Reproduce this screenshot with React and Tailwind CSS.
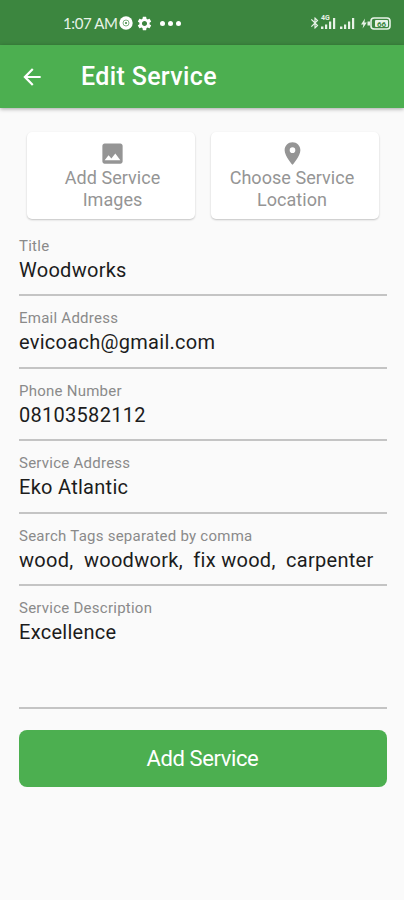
import { MdArrowBack, MdBluetooth, MdImage, MdPlace, MdSettings } from 'react-icons/md';

const fields = [
  { label: 'Title', value: 'Woodworks' },
  { label: 'Email Address', value: 'evicoach@gmail.com' },
  { label: 'Phone Number', value: '08103582112' },
  { label: 'Service Address', value: 'Eko Atlantic' },
  { label: 'Search Tags separated by comma', value: 'wood,  woodwork,  fix wood,  carpenter' },
];

const SignalBars = () => (
  <svg className="h-[12px] w-[15px]" viewBox="0 0 15 12" fill="currentColor">
    <rect x="0" y="9.5" width="2.4" height="2.5" />
    <rect x="4" y="7.5" width="2.2" height="4.5" />
    <rect x="8" y="4.5" width="2.2" height="7.5" />
    <rect x="12" y="1" width="2.2" height="11" />
  </svg>
);

const StatusBar = () => (
  <div className="flex h-[45px] items-center justify-between bg-[#3c863f] pl-[63px] pr-[13px] pt-px text-[#e8f3e8]">
    <div className="flex items-center">
      <span className="w-[56px] whitespace-nowrap font-['Lato'] text-[15px] leading-none tracking-[-0.4px]">1:07 AM</span>
      <svg className="h-[14px] w-[14px]" viewBox="0 0 14 14">
        <circle cx="7" cy="7" r="6.7" fill="#fff" />
        <circle cx="7" cy="7" r="3" fill="none" stroke="#7fb181" strokeWidth="1" />
        <circle cx="7" cy="7" r="1" fill="#3c863f" />
      </svg>
      <MdSettings className="ml-[3px] h-[17px] w-[17px] text-white" />
      <div className="ml-[7px] flex gap-[3px] text-white">
        <span className="h-[5px] w-[5px] rounded-full bg-current" />
        <span className="h-[5px] w-[5px] rounded-full bg-current" />
        <span className="h-[5px] w-[5px] rounded-full bg-current" />
      </div>
    </div>

    <div className="flex items-center">
      <MdBluetooth className="mr-[-1px] h-[14px] w-[14px]" />
      <div className="relative">
        <SignalBars />
        <span className="absolute -top-[2px] left-0 text-[7px] font-bold leading-none">4G</span>
      </div>
      <div className="ml-[4px]">
        <SignalBars />
      </div>
      <svg className="ml-[6px] h-[13px] w-[30px]" viewBox="0 0 30 13">
        <path d="M4 1.5 0 7.5h2.4L1.6 11.5 5.8 5.5H3.4z" fill="currentColor" />
        <rect x="6.5" y="4.5" width="2.5" height="4" fill="currentColor" />
        <rect x="10" y="1" width="19" height="11" rx="3" fill="none" stroke="currentColor" strokeWidth="1.6" />
        <rect x="14" y="3" width="13" height="7" rx="1" fill="currentColor" />
        <text x="20.5" y="9.5" fontSize="8" fontWeight="700" textAnchor="middle" fill="#3c863f">66</text>
      </svg>
    </div>
  </div>
);

const ActionCard = ({ icon: Icon, first, second, className }) => (
  <button
    className={`flex h-[87px] w-[168px] flex-col items-center rounded-[5px] bg-white pt-[8px] text-[#959595] shadow-[0_1px_2px_rgba(0,0,0,0.22)] ${className}`}
  >
    <Icon className="h-[27px] w-[27px]" />
    <span className="text-[18px] leading-[21.5px] tracking-[0.05px]">
      {first}
      <br />
      {second}
    </span>
  </button>
);

const Field = ({ label, value, tall }) => (
  <div className={tall ? 'h-[123px] border-b-2 border-[#c4c4c4]' : 'h-[72.4px] border-b-2 border-[#c4c4c4]'}>
    <p className="pl-[0.5px] pt-[12px] text-[15px] leading-[20px] tracking-[0.25px] text-[#8a8a8a]">{label}</p>
    <p className="whitespace-pre pl-[0.5px] pt-px text-[20px] leading-[26px] tracking-[0.28px] text-[#1c1c1c]">{value}</p>
  </div>
);

export default function App() {
  return (
    <div className="h-[900px] w-full overflow-hidden bg-[#fafafa] font-['Roboto',sans-serif]">
      <StatusBar />

      <header className="flex h-[63px] items-center bg-[#4caf50] pl-[19px] text-white shadow-[0_1px_4px_rgba(0,0,0,0.35)]">
        <MdArrowBack className="h-[26px] w-[26px]" />
        <h1 className="ml-[36px] pt-px text-[25px] font-medium tracking-[0.35px]">Edit Service</h1>
      </header>

      <main className="pl-[18.5px] pr-[17.5px] pt-[24px]">
        <div className="flex justify-center gap-[16px]">
          <ActionCard icon={MdImage} first="Add Service" second="Images" className="pl-[4px]" />
          <ActionCard icon={MdPlace} first="Choose Service" second="Location" className="pr-[5px]" />
        </div>

        <div className="mt-[5px]">
          {fields.map((field) => (
            <Field key={field.label} label={field.label} value={field.value} />
          ))}
          <Field label="Service Description" value="Excellence" tall />
        </div>

        <button className="mt-[21px] h-[57px] w-full rounded-[8px] bg-[#4caf50] text-[22px] tracking-[-0.4px] text-white">
          Add Service
        </button>
      </main>
    </div>
  );
}
